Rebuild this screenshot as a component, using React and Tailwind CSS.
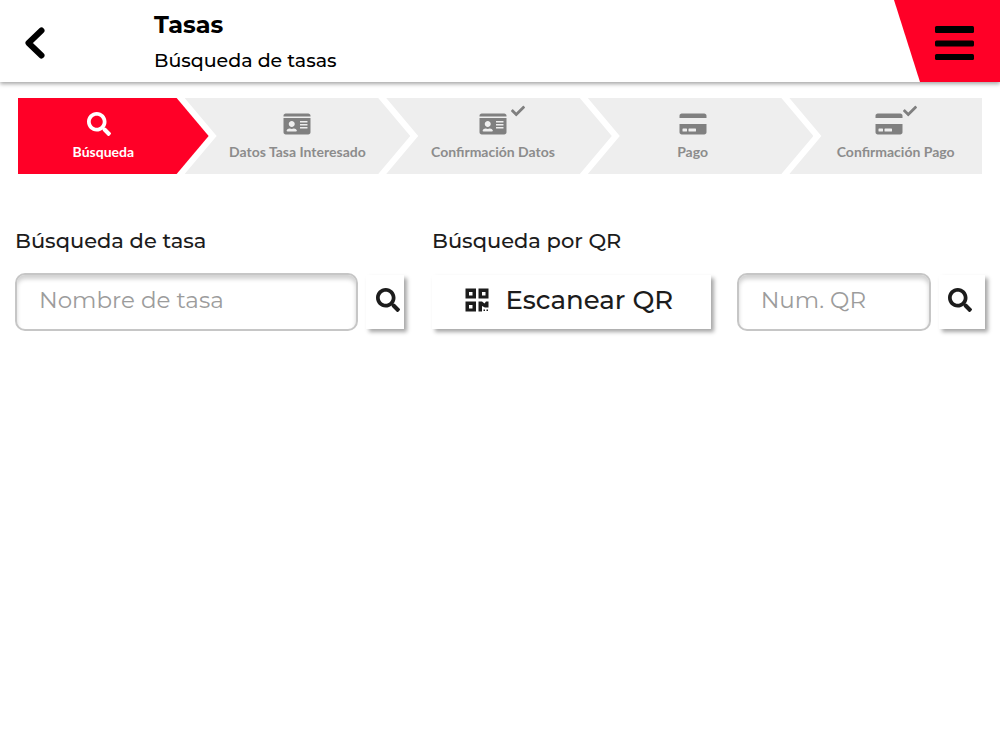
import React from "react";
import { FaSearch, FaIdCard, FaCreditCard, FaCheck } from "react-icons/fa";

const MIDDLE =
  "flex-[226_1_0%] -ml-6 bg-[#eeeeee] text-[#8c8c8c] [clip-path:polygon(0_0,calc(100%-32px)_0,100%_50%,calc(100%-32px)_100%,0_100%,32px_50%)]";

const STEPS = [
  {
    label: "Búsqueda",
    icon: "search",
    box: "flex-[191_1_0%] bg-[#ff0027] text-white [clip-path:polygon(0_0,calc(100%-32px)_0,100%_50%,calc(100%-32px)_100%,0_100%)]",
    inner: "pr-5",
  },
  { label: "Datos Tasa Interesado", icon: "id", box: MIDDLE, inner: "" },
  { label: "Confirmación Datos", icon: "id-check", box: MIDDLE, inner: "pr-3" },
  { label: "Pago", icon: "card", box: MIDDLE, inner: "pr-4" },
  {
    label: "Confirmación Pago",
    icon: "card-check",
    box: "flex-[193_1_0%] -ml-6 bg-[#eeeeee] text-[#8c8c8c] [clip-path:polygon(0_0,100%_0,100%_100%,0_100%,32px_50%)]",
    inner: "pl-5",
  },
];

function StepIcon({ name }) {
  if (name === "search") return <FaSearch className="mr-2 size-6" aria-hidden="true" />;
  if (name === "card-check") {
    return (
      <span className="flex text-[#808080]">
        <FaCreditCard className="h-6 w-7" aria-hidden="true" />
        <FaCheck className="-mt-2 size-3.5" aria-hidden="true" />
      </span>
    );
  }
  const Glyph = name.startsWith("id") ? FaIdCard : FaCreditCard;
  return (
    <span className="relative flex text-[#808080]">
      <Glyph className="h-6 w-7" aria-hidden="true" />
      {name.endsWith("check") && (
        <FaCheck className="absolute -top-2 left-full ml-1 size-3.5" aria-hidden="true" />
      )}
    </span>
  );
}

function QrIcon() {
  return (
    <svg viewBox="0 0 24 24" className="size-6" fill="currentColor" aria-hidden="true">
      <path
        fillRule="evenodd"
        d="M0.500 0.500h10.500v10H0.500zM4 4v3.500h3.500V4zM13.500 0.500h10v10h-10zM17 4v3.500h3.500V4zM0.500 13.500h10.500v10H0.500zM4 17v3.500h3.500v-3.500z"
      />
      <path d="M13.500 13.500h3.500l2.500 2 1.500-2h2.500v6h-3.500l-3-1.500v5.500h-3.500z" />
      <path d="M18.500 21.500h1.500v1.500h-1.500zM21.500 21.500h1.500v1.500h-1.500z" />
    </svg>
  );
}

const raised = "bg-white text-[#1c1c1c] shadow-[3px_3px_4px_rgba(0,0,0,0.35)]";
const field =
  "h-[58px] w-full min-w-0 rounded-[10px] border-2 border-[#c6c6c6] bg-white px-[22px] pb-1 text-[23px] font-normal text-[#333333] shadow-[inset_0_4px_4px_rgba(0,0,0,0.18)] placeholder:text-[#9c9c9c] outline-none";

export default function App() {
  return (
    <div className="min-h-screen bg-white font-['Montserrat','Inter',sans-serif] text-black">
      <header className="flex h-[82px] items-stretch bg-white shadow-[0_2px_4px_rgba(0,0,0,0.35)]">
        <button type="button" aria-label="Volver" className="flex w-[154px] items-center pt-1 pl-6">
          <svg viewBox="0 0 22 34" className="h-[34px] w-[22px]" fill="none" stroke="currentColor" aria-hidden="true">
            <path d="M17.500 4.500 4.500 17l13 12.500" strokeWidth="6" strokeLinecap="round" strokeLinejoin="round" />
          </svg>
        </button>
        <div className="flex flex-1 flex-col gap-1 pt-[9px]">
          <h1 className="text-2xl leading-8 font-bold">Tasas</h1>
          <p className="text-[19px] leading-8 font-medium">Búsqueda de tasas</p>
        </div>
        <button
          type="button"
          aria-label="Menú"
          className="flex w-[106px] items-center justify-end bg-[#ff0027] pt-1 pr-[26px] [clip-path:polygon(0_0,100%_0,100%_100%,26px_100%)]"
        >
          <svg viewBox="0 0 40 36" className="h-9 w-10" fill="currentColor" aria-hidden="true">
            <rect x="1" y="1" width="39" height="7" rx="1.5" />
            <rect x="1" y="15.5" width="39" height="6" rx="1.5" />
            <rect x="1" y="29" width="39" height="6" rx="1.5" />
          </svg>
        </button>
      </header>

      <ol className="flex px-[18px] pt-4">
        {STEPS.map((step) => (
          <li key={step.label} className={`h-[76px] min-w-0 ${step.box}`}>
            <div
              className={`flex h-full flex-col items-center justify-center gap-1 pt-1 font-['Lato',sans-serif] ${step.inner}`}
            >
              <StepIcon name={step.icon} />
              <span className="text-sm leading-6 font-bold whitespace-nowrap">{step.label}</span>
            </div>
          </li>
        ))}
      </ol>

      <main className="grid grid-cols-[minmax(0,389fr)_minmax(0,553fr)] gap-7 pt-[51px] pr-[15px] pl-[15px]">
        <form onSubmit={(e) => e.preventDefault()}>
          <label htmlFor="tasa" className="block text-[21px] leading-8 font-medium text-[#1c1c1c]">
            Búsqueda de tasa
          </label>
          <div className="mt-4 flex items-center gap-2">
            <div className="flex min-w-0 flex-1">
              <input id="tasa" type="text" placeholder="Nombre de tasa" className={field} />
            </div>
            <button type="submit" aria-label="Buscar tasa" className={`flex h-[54px] w-[38px] items-center justify-end pr-1 pb-1 ${raised}`}>
              <FaSearch className="size-6" aria-hidden="true" />
            </button>
          </div>
        </form>

        <form onSubmit={(e) => e.preventDefault()}>
          <label htmlFor="qr" className="block text-[21px] leading-8 font-medium text-[#1c1c1c]">
            Búsqueda por QR
          </label>
          <div className="mt-4 flex items-center">
            <button
              type="button"
              className={`flex h-[54px] flex-[277_1_0%] items-center justify-center gap-4 pr-1 pb-1 text-[26px] font-medium whitespace-nowrap ${raised}`}
            >
              <QrIcon />
              Escanear QR
            </button>
            <div className="ml-[26px] flex min-w-0 flex-[196_1_0%]">
              <input id="qr" type="text" placeholder="Num. QR" className={field} />
            </div>
            <button type="submit" aria-label="Buscar QR" className={`ml-2 flex h-[54px] w-[46px] items-center justify-center pr-1 pb-1 ${raised}`}>
              <FaSearch className="size-6" aria-hidden="true" />
            </button>
          </div>
        </form>
      </main>
    </div>
  );
}
